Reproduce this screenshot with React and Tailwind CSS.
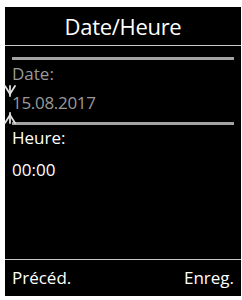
export default function App() {
  return (
    <div className="w-[242px] h-[300px] bg-white pt-[7px] pl-[5px] pr-[1px] pb-[4px]" style={{ fontFamily: '"Open Sans", "Noto Sans", sans-serif' }}>
      <div className="h-full bg-black flex flex-col text-white">
        {/* header */}
        <div className="h-[39px] flex items-center justify-center border-b border-[#c8c8c8]">
          <span className="text-[22px] leading-none tracking-[-0.3px]">Date/Heure</span>
        </div>

        <div className="flex-1 flex flex-col px-[7px] pt-[11px]">
          <div className="h-[3px] bg-[#a3a3a3]" />
          <div className="text-[#9a9a9a] text-[17px] leading-[22px] mt-[3px]">Date:</div>
          <div className="relative text-[#9a9a9a] text-[17px] leading-[22px] mt-[7px] tracking-[-0.3px]">
            15.08.2017
            <svg className="absolute -left-[8px] -top-[7px] z-10" width="12" height="40" viewBox="0 0 12 40">
              <g stroke="#e0e0e0" strokeWidth="1.8" strokeLinecap="round">
                <line x1="1" y1="1" x2="6" y2="9" />
                <line x1="11" y1="1" x2="6" y2="9" />
                <line x1="6" y1="1" x2="6" y2="11" />
                <line x1="6" y1="28" x2="6" y2="38" />
                <line x1="6" y1="30" x2="1" y2="38" />
                <line x1="6" y1="30" x2="11" y2="38" />
              </g>
            </svg>
          </div>
          <div className="h-[3px] bg-[#a3a3a3] mt-[8px]" />
          <div className="text-[17px] leading-[22px] mt-[2px]">Heure:</div>
          <div className="text-[17px] leading-[22px] mt-[10px]">00:00</div>
        </div>

        {/* footer */}
        <div className="h-[37px] border-t border-[#c8c8c8] flex items-center justify-between px-[7px] text-[17px]">
          <span>Précéd.</span>
          <span>Enreg.</span>
        </div>
      </div>
    </div>
  );
}
